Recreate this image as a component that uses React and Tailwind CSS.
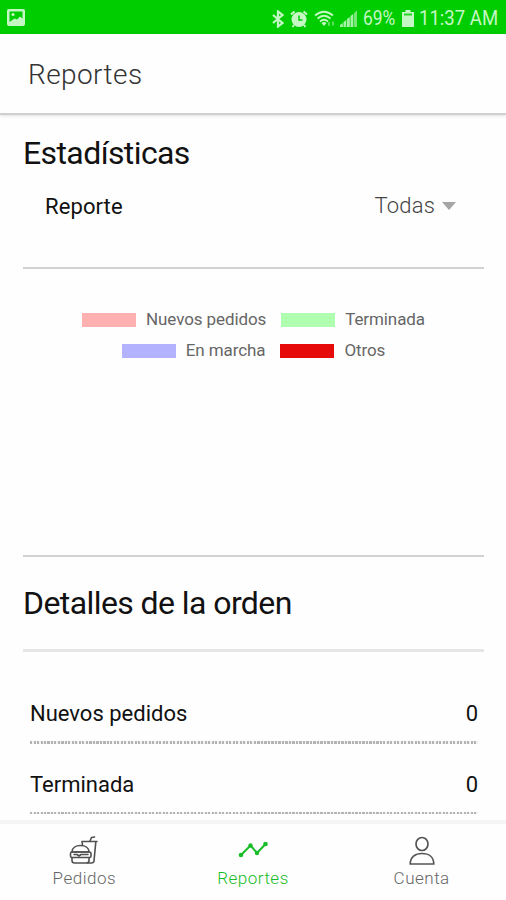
import React from 'react';

const legend = [
  [
    { label: 'Nuevos pedidos', color: 'bg-[#ffb0b0]' },
    { label: 'Terminada', color: 'bg-[#b0ffb0]' },
  ],
  [
    { label: 'En marcha', color: 'bg-[#b2b2ff]' },
    { label: 'Otros', color: 'bg-[#e60a0a]' },
  ],
];

const orders = [
  { label: 'Nuevos pedidos', count: 0 },
  { label: 'Terminada', count: 0 },
];

const StatusBar = () => (
  <div className="h-[34px] shrink-0 bg-[#00cd00] text-[#c4f7c4] flex items-center justify-between pl-[7px] pr-2">
    <svg width="18" height="17" viewBox="0 0 18 17" className="mt-px">
      <rect width="18" height="17" rx="2" fill="currentColor" />
      <path d="M2.500 2.500h13v7l-2.500-2-3 3-2.500-1-5 3.500z" fill="#00cd00" />
      <circle cx="6" cy="5.500" r="1.600" fill="currentColor" />
    </svg>

    <div className="flex items-center h-full pt-[3px]">
      <svg width="12" height="18" viewBox="0 0 12 18" fill="none" stroke="currentColor" strokeWidth="2.200">
        <path d="M1 5l9.500 8L6 16.500v-15L10.500 5 1 13" />
      </svg>
      <svg width="18" height="18" viewBox="0 0 18 18" className="ml-[6px]" fill="none" stroke="currentColor">
        <circle cx="9" cy="9.500" r="7.500" fill="currentColor" stroke="none" />
        <path d="M1 4.500L4.500 1.500M17 4.500L13.500 1.500M4 15l-1.500 2M14 15l1.500 2" strokeWidth="2" />
        <path d="M9 5.500V10h3.500" stroke="#00cd00" strokeWidth="1.500" />
      </svg>
      <svg width="22" height="18" viewBox="0 0 22 18" className="ml-[6px]" fill="none" stroke="currentColor" strokeWidth="1.800">
        <path d="M1 5.500q9-7.500 18 0M3.500 8.500q6.500-5.500 13 0M6 11.500q4-3.500 8 0" />
        <path d="M7.500 13q2.500-2 5 0L10 16z" fill="currentColor" stroke="none" />
        <path d="M15 12v4M19 11.500v4" strokeOpacity="0.5" />
      </svg>
      <svg width="18" height="18" viewBox="0 0 18 18" className="ml-1" fill="currentColor">
        <path d="M0 17v-2l2.800-2v4zM3.500 17v-5l2.800-2v7zM7 17V9l2.800-2v10zM10.500 17V6l2.800-2v13z" opacity="0.85" />
        <path d="M14 17V3l3-2.500V17z" opacity="0.6" />
      </svg>
      <span className="w-[34px] ml-[5px] text-[20.500px] leading-none whitespace-nowrap">
        <span className="inline-block origin-left scale-x-[0.85]">69%</span>
      </span>
      <svg width="12" height="17" viewBox="0 0 12 17" className="ml-[5px] -mt-px">
        <path d="M3.500 0h5v2H12v15H0V2h3.500z" fill="currentColor" />
        <path d="M2 3.500h8v2H2z" fill="#00cd00" opacity="0.8" />
      </svg>
      <span className="w-[79px] ml-[5px] text-[20.500px] leading-none whitespace-nowrap">
        <span className="inline-block origin-left scale-x-[0.905]">11:37 AM</span>
      </span>
    </div>
  </div>
);

const FoodIcon = () => (
  <svg width="30" height="30" viewBox="0 0 30 30" fill="none" stroke="#505050" strokeWidth="1.600" strokeLinecap="round" strokeLinejoin="round">
    <path d="M3 16c0-4.500 4-6.500 8.500-6.500S20 11.500 20 16z" />
    <rect x="1.500" y="16" width="20.500" height="5.500" rx="1.500" />
    <path d="M5 18.500h3l2 1.500 2-1.500h7" />
    <path d="M3 22v2.500c0 1.500 1 2.500 2.500 2.500h12c1.500 0 2.500-1 2.500-2.500V22" />
    <path d="M13.500 9L13 5.500h15M26.800 6l-1.800 19c-.2 1.500-1 2-2.500 2h-4" />
    <path d="M21 5l1.500-3.500L25.500 1" />
  </svg>
);

const ChartIcon = () => (
  <svg width="30" height="18" viewBox="0 0 30 18" fill="none" stroke="#19bd28" strokeWidth="2">
    <path d="M3 14l9.500-9.500L19 12l8.500-9" />
    <g fill="#19bd28" stroke="none">
      <circle cx="3" cy="14" r="2.300" />
      <circle cx="12.500" cy="4.500" r="2.200" />
      <circle cx="19" cy="12" r="2.200" />
      <circle cx="27.500" cy="3" r="2.300" />
    </g>
  </svg>
);

const UserIcon = () => (
  <svg width="26" height="30" viewBox="0 0 26 30" fill="none" stroke="#555" strokeWidth="1.700" strokeLinejoin="round">
    <ellipse cx="13" cy="8" rx="6" ry="6.500" />
    <path d="M1.200 28c0-7 5-10.500 11.800-10.500S24.800 21 24.800 28z" />
  </svg>
);

const App = () => {
  return (
    <div className="h-[900px] w-full bg-[#fefefe] flex flex-col overflow-hidden font-['Roboto',sans-serif] text-[#111]">
      <StatusBar />

      <header className="h-[81px] shrink-0 flex items-center pt-[2px] pl-[28px] border-b-2 border-[#d0d0d0] shadow-[0_1px_3px_rgba(0,0,0,0.12)]">
        <h1 className="text-[28px] font-light tracking-[0.4px] text-[#333]">Reportes</h1>
      </header>

      <main className="grow min-h-0 overflow-hidden pl-[23px] pr-[22px]">
        <section className="h-[154px] border-b-2 border-[#d2d2d2] flex flex-col">
          <h2 className="mt-[18px] text-[32px] leading-10 tracking-[-0.6px] whitespace-nowrap">Estadísticas</h2>
          <div className="mt-[18px] flex items-center justify-between pl-[22px] pr-7">
            <span className="text-[22px] leading-8 tracking-[0.1px]">Reporte</span>
            <div className="-mt-[2px] flex items-center text-[22px] leading-8 tracking-[0.2px] text-[#444] font-light">
              Todas
              <svg width="14" height="8" viewBox="0 0 14 8" className="ml-[7px]">
                <path d="M0 0h14L7 8z" fill="#a5a5a5" />
              </svg>
            </div>
          </div>
        </section>

        <section className="h-72 pt-[35px] border-b-2 border-[#d2d2d2] text-[17px] tracking-[-0.100px] text-[#666]">
          {legend.map((row, i) => (
            <div key={i} className="h-[31px] flex items-center justify-center gap-[15px]">
              {row.map((item) => (
                <div key={item.label} className="flex items-center gap-[10px]">
                  <span className={`w-[54px] h-[14px] ${item.color}`} />
                  <span className="whitespace-nowrap">{item.label}</span>
                </div>
              ))}
            </div>
          ))}
        </section>

        <section>
          <h2 className="h-[95px] pt-[26px] border-b-[3px] border-[#e6e6e6] text-[32px] leading-10 tracking-[-0.58px] whitespace-nowrap">
            Detalles de la orden
          </h2>
          <div className="pl-[7px] pr-[6px] pt-[21px]">
            {orders.map((order) => (
              <div key={order.label}>
                <div className="h-[68px] pb-[11px] flex items-end justify-between text-[22px] leading-8">
                  <span>{order.label}</span>
                  <span>{order.count}</span>
                </div>
                <div className="h-[2.500px] bg-[repeating-linear-gradient(90deg,#b4b4b4_0_2px,#f2f2f2_2px_3.500px)]" />
              </div>
            ))}
          </div>
        </section>
      </main>

      <nav className="h-[80px] shrink-0 border-t-4 border-[#f5f5f5] grid grid-cols-3 text-[17px] font-light tracking-[0.5px] text-[#666]">
        <div className="flex flex-col items-center">
          <div className="h-[42px] flex items-end"><FoodIcon /></div>
          <span className="leading-6">Pedidos</span>
        </div>
        <div className="flex flex-col items-center text-[#19bd28]">
          <div className="h-[42px] flex items-end pb-[7px]"><ChartIcon /></div>
          <span className="leading-6">Reportes</span>
        </div>
        <div className="flex flex-col items-center">
          <div className="h-[42px] flex items-end"><UserIcon /></div>
          <span className="leading-6">Cuenta</span>
        </div>
      </nav>
    </div>
  );
};

export default App;
